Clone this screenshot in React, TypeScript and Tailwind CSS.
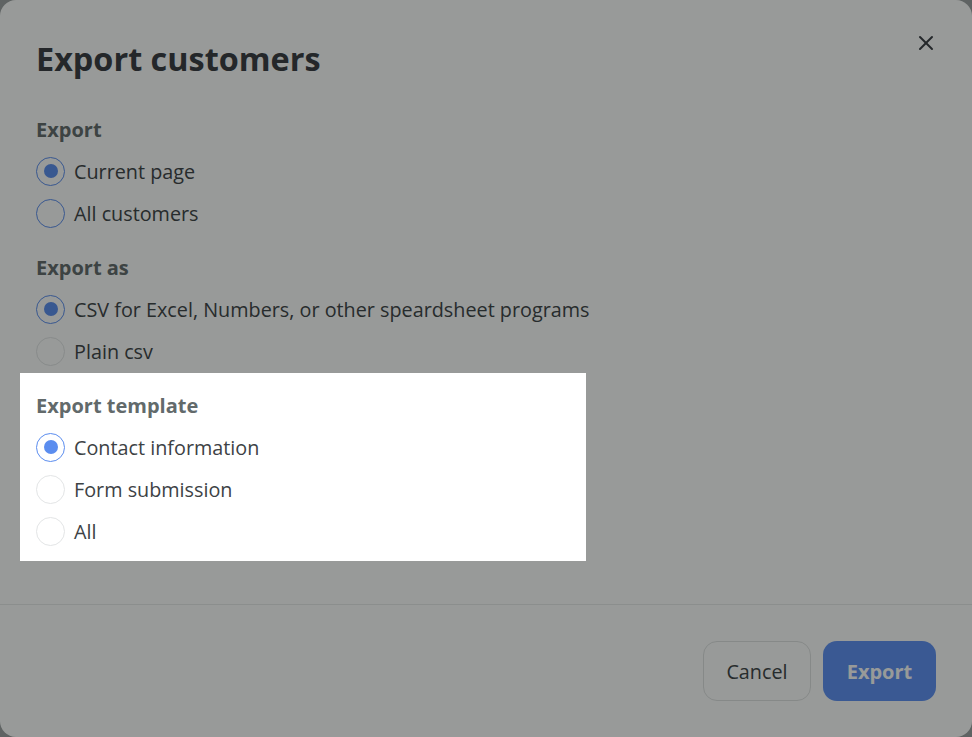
import React from "react";
import { X } from "lucide-react";

type Opt = { label: string; checked?: boolean; border: "blue" | "gray" };

function Radio({ label, checked, border }: Opt) {
  return (
    <div className="flex h-[42px] items-center">
      <span
        className={
          "flex h-[29px] w-[29px] items-center justify-center rounded-full border bg-white " +
          (border === "blue" ? "border-[#5b8def]" : "border-[#e3e5e6]")
        }
      >
        {checked ? <span className="h-[14px] w-[14px] rounded-full bg-[#5b8def]" /> : null}
      </span>
      <span className="ml-[9px] pt-[2px] text-[19.8px] leading-[28px] text-[#3d4245]">{label}</span>
    </div>
  );
}

function Section({ title, options }: { title: string; options: Opt[] }) {
  return (
    <div className="flex flex-col">
      <div className="mb-[6px] text-[20px] font-bold leading-[28px] text-[#626a6b]">{title}</div>
      {options.map((o) => (
        <Radio key={o.label} {...o} />
      ))}
    </div>
  );
}

export default function App() {
  return (
    <div
      className="relative h-[737px] w-[972px] overflow-hidden bg-[#9da1a2]"
      style={{ fontFamily: '"Open Sans", "Noto Sans", sans-serif' }}
    >
      <div className="flex h-full flex-col rounded-[16px] bg-white">
        <div className="relative px-9 pt-[38px]">
          <h1 className="text-[32.4px] font-bold leading-[40px] text-[#373a40]">Export customers</h1>
          <button className="absolute right-[34px] top-[31px] text-[#373a40]">
            <X size={24} strokeWidth={2} />
          </button>
        </div>
        <div className="mt-[38px] flex flex-col gap-[20px] px-9">
          <Section
            title="Export"
            options={[
              { label: "Current page", checked: true, border: "blue" },
              { label: "All customers", border: "blue" },
            ]}
          />
          <Section
            title="Export as"
            options={[
              { label: "CSV for Excel, Numbers, or other speardsheet programs", checked: true, border: "blue" },
              { label: "Plain csv", border: "gray" },
            ]}
          />
          <Section
            title="Export template"
            options={[
              { label: "Contact information", checked: true, border: "blue" },
              { label: "Form submission", border: "gray" },
              { label: "All", border: "gray" },
            ]}
          />
        </div>
        <div className="mt-[52px] flex justify-end gap-3 border-t border-[#e9ebea] px-9 pt-[36px]">
          <button className="h-[60px] w-[108px] rounded-[14px] border border-[#e0e2e2] bg-white pt-[2px] text-[19.8px] text-[#3d4245]">
            Cancel
          </button>
          <button className="h-[60px] w-[113px] rounded-[14px] bg-[#5d90f5] pt-[2px] text-[20px] font-bold text-white">
            Export
          </button>
        </div>
      </div>
      <div className="pointer-events-none absolute left-[20px] top-[373px] h-[188px] w-[566px] shadow-[0_0_0_2000px_rgba(10,15,12,0.42)]" />
    </div>
  );
}
